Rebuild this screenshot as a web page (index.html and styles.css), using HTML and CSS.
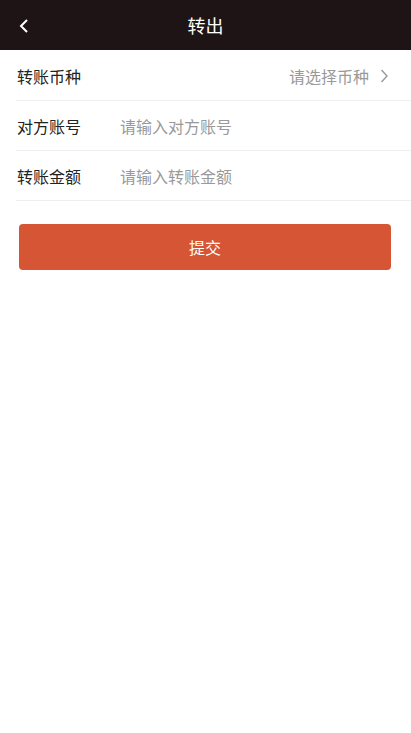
FILE: index.html
```html
<!DOCTYPE html>
<html lang="zh">
<head>
<meta charset="utf-8">
<link rel="stylesheet" href="styles.css">
</head>
<body>
<header class="bar">
  <span class="back"><svg width="12" height="16" viewBox="0 0 12 16"><path d="M9 2 L3 8 L9 14" fill="none" stroke="#fff" stroke-width="2"/></svg></span>
  <h1 class="title">转出</h1>
</header>
<main class="form">
  <div class="row">
    <span class="label">转账币种</span>
    <span class="select">请选择币种<svg class="chev" width="8" height="14" viewBox="0 0 8 14"><path d="M1.5 1 L7 7 L1.5 13" fill="none" stroke="#999" stroke-width="1.4"/></svg></span>
  </div>
  <div class="row">
    <span class="label">对方账号</span>
    <span class="ph">请输入对方账号</span>
  </div>
  <div class="row">
    <span class="label">转账金额</span>
    <span class="ph">请输入转账金额</span>
  </div>
  <button class="submit">提交</button>
</main>
</body>
</html>
```
FILE: styles.css
```css
* { box-sizing: border-box; }
body {
  margin: 0;
  background: #fff;
  font-family: "Noto Sans CJK SC", "Noto Sans", sans-serif;
  color: #222;
}
.bar {
  height: 50px;
  background: #1e1415;
  display: flex;
  align-items: center;
  justify-content: center;
  position: relative;
}
.back {
  position: absolute;
  left: 18px;
  top: 18px;
  display: flex;
}
.title {
  margin: 0;
  font-size: 18px;
  font-weight: normal;
  color: #fff;
}
.form {
  padding-left: 16px;
  padding-top: 1px;
}
.row {
  height: 50px;
  display: flex;
  align-items: center;
  border-bottom: 1px solid #efefef;
  font-size: 16px;
}
.label {
  width: 104px;
  padding-left: 1px;
  color: #222;
}
.ph {
  color: #999;
}
.select {
  margin-left: auto;
  margin-right: 23px;
  color: #999;
  display: flex;
  align-items: center;
}
.chev {
  margin-left: 11px;
}
.submit {
  display: block;
  margin: 23px 20px 0 3px;
  width: 372px;
  height: 46px;
  border: none;
  border-radius: 4px;
  background: #d65535;
  color: #fff;
  font-size: 16px;
  font-family: inherit;
}
```
